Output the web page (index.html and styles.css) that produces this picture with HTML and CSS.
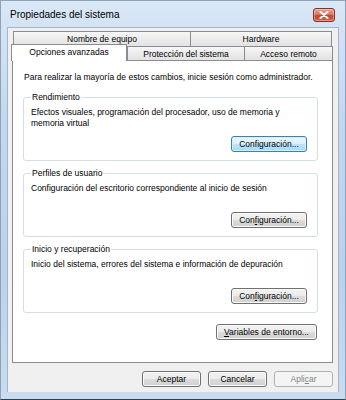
FILE: index.html
```html
<!doctype html>
<html lang="es">
  <head>
    <meta charset="utf-8">
    <title>Propiedades del sistema</title>
    <link rel="stylesheet" href="styles.css">
  </head>
  <body>
    <div class="window">
      <div class="titlebar">
        <span class="title">Propiedades del sistema</span>
        <button class="close" type="button" aria-label="Cerrar">
          <svg width="10" height="8" viewBox="0 0 10 8">
            <path d="M1.5 1 L8.5 7 M8.5 1 L1.5 7" stroke="#fff" stroke-width="2" stroke-linecap="round"/>
          </svg>
        </button>
      </div>

      <div class="client">
        <div class="tabrow tabrow-back">
          <div class="tab tab-name">Nombre de equipo</div>
          <div class="tab tab-hw">Hardware</div>
        </div>
        <div class="tabrow tabrow-front">
          <div class="tab tab-selected">Opciones avanzadas</div>
          <div class="tab tab-prot">Protección del sistema</div>
          <div class="tab tab-remote">Acceso remoto</div>
        </div>

        <div class="panel">
          <p class="intro">Para realizar la mayoría de estos cambios, inicie sesión como administrador.</p>

          <fieldset class="group">
            <legend>Rendimiento</legend>
            <p class="desc">Efectos visuales, programación del procesador, uso de memoria y memoria virtual</p>
            <div class="group-actions">
              <button class="btn btn-default" type="button">Configuración...</button>
            </div>
          </fieldset>

          <fieldset class="group">
            <legend>Perfiles de usuario</legend>
            <p class="desc">Configuración del escritorio correspondiente al inicio de sesión</p>
            <div class="group-actions">
              <button class="btn" type="button">Con<u>f</u>iguración...</button>
            </div>
          </fieldset>

          <fieldset class="group">
            <legend>Inicio y recuperación</legend>
            <p class="desc">Inicio del sistema, errores del sistema e información de depuración</p>
            <div class="group-actions">
              <button class="btn" type="button">Con<u>f</u>iguración...</button>
            </div>
          </fieldset>

          <div class="panel-actions">
            <button class="btn btn-env" type="button"><u>V</u>ariables de entorno...</button>
          </div>
        </div>

        <div class="footer">
          <button class="btn btn-footer" type="button">Aceptar</button>
          <button class="btn btn-footer" type="button">Cancelar</button>
          <button class="btn btn-footer" type="button" disabled>Apli<u>c</u>ar</button>
        </div>
      </div>
    </div>
  </body>
</html>
```

FILE: styles.css
```css
body {
  margin: 0;
  font-family: "Liberation Sans", Arial, sans-serif;
  font-size: 8.5px;
  color: #000;
  background: #fff;
}

.window {
  width: 346px;
  height: 400px;
  box-sizing: border-box;
  border: 1px solid #8fa3b8;
  border-bottom-color: #33404d;
  background: linear-gradient(#d9e7f6, #c3d7ee 30%, #bcd2ea 70%, #c9dcf0);
  display: flex;
  flex-direction: column;
}

.titlebar {
  height: 26px;
  display: flex;
  align-items: center;
  padding: 0 10px 0 9px;
}

.title {
  flex: 1;
  font-size: 10px;
  color: #000;
}

.close {
  width: 22px;
  height: 14px;
  margin: 1px 0 0 0;
  padding: 0;
  border: 1px solid #8a2f22;
  border-radius: 3px;
  background: linear-gradient(#e8a494, #d77a66 45%, #c6452f 55%, #d0664c);
  box-shadow: inset 0 0 0 1px rgba(255, 255, 255, 0.35);
  display: flex;
  align-items: center;
  justify-content: center;
}

.client {
  margin: 0 6px;
  height: 365px;
  background: #f0f0f0;
  border: 1px solid #a2b6cb;
  border-bottom: none;
  box-sizing: border-box;
  padding-top: 3px;
}

/* tabs */
.tabrow {
  display: flex;
  height: 15px;
}

.tabrow-back {
  margin-left: 5px;
  width: 319px;
}

.tabrow-front {
  height: 14px;
  margin-left: 3px;
}

.tab {
  box-sizing: border-box;
  border: 1px solid #898c95;
  border-bottom: none;
  background: linear-gradient(#f7f7f7, #ececec 50%, #e2e2e2);
  text-align: center;
  line-height: 14px;
  white-space: nowrap;
}

.tab + .tab {
  margin-left: -1px;
}

.tab-name { width: 178px; }
.tab-hw { width: 142px; }

.tab-selected {
  width: 116px;
  height: 17px;
  margin-top: -2px;
  background: #fff;
  position: relative;
  z-index: 1;
  line-height: 14px;
}

.tab-prot { width: 118px; margin-left: 0 !important; }
.tab-remote { width: 89px; }

/* panel */
.panel {
  margin-left: 4px;
  width: 321px;
  height: 303px;
  box-sizing: border-box;
  background: #fff;
  border: 1px solid #898c95;
  padding: 11px 14px 0 10px;
}

.intro {
  margin: 0 0 9px 1px;
  line-height: 11px;
  white-space: nowrap;
}

.group {
  margin: 0 0 7px 0;
  padding: 0 10px 8px 7px;
  border: 1px solid #d5dfe5;
  border-radius: 3px;
}

.group legend {
  padding: 0 1px;
  margin-left: 0;
  line-height: 11px;
}

.desc {
  margin: 4px 0 0 0;
  height: 22px;
  line-height: 11px;
}

.group-actions {
  display: flex;
  justify-content: flex-end;
  margin-top: 7px;
}

.panel-actions {
  display: flex;
  justify-content: flex-end;
  margin-top: 11px;
  padding-right: 1px;
}

/* buttons */
.btn {
  font-family: "Liberation Sans", Arial, sans-serif;
  font-size: 8.5px;
  color: #000;
  height: 16px;
  width: 76px;
  padding: 0;
  border: 1px solid #707070;
  border-radius: 3px;
  background: linear-gradient(#f2f2f2, #ebebeb 50%, #dddddd 50%, #cfcfcf);
  box-shadow: inset 0 0 0 1px #fbfbfb;
  line-height: 13px;
}

.btn u {
  text-decoration-thickness: 1px;
  text-underline-offset: 1px;
}

.btn-default {
  border-color: #3c7fb1;
  background: linear-gradient(#eaf6fd, #d9f0fc 50%, #bee6fd 50%, #a7d9f5);
  box-shadow: inset 0 0 0 1px #d8eefb;
}

.btn-env {
  width: 101px;
}

.btn[disabled] {
  color: #838383;
  border-color: #adb2b5;
  background: #f4f4f4;
  box-shadow: none;
}

.footer {
  display: flex;
  justify-content: flex-end;
  gap: 7px;
  padding: 8px 5px 0 0;
}

.btn-footer {
  width: 59px;
}
```
